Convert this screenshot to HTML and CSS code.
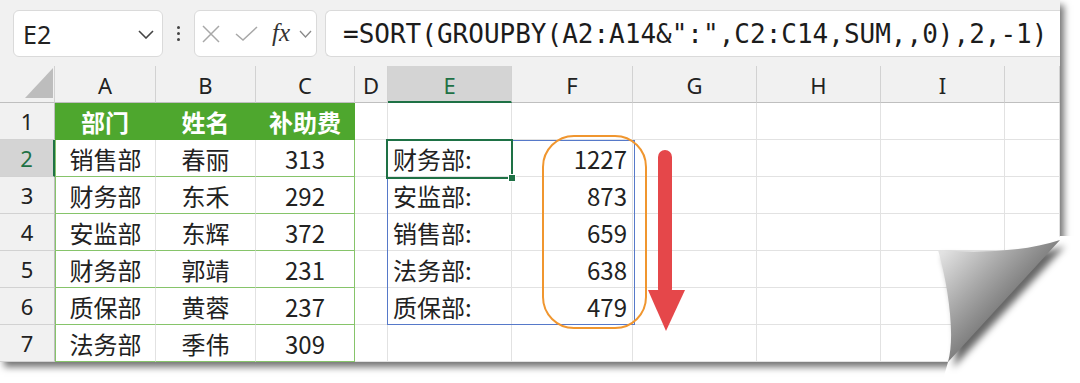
FILE: index.html
```html
<!DOCTYPE html>
<html lang="zh-CN">
<head>
<meta charset="utf-8">
<title>SORT GROUPBY</title>
<link rel="stylesheet" href="styles.css">
</head>
<body>
<div class="page">
  <div class="sheet">
    <div class="toolbar">
      <div class="namebox">
        <span>E2</span>
        <svg class="chev" width="16" height="9" viewBox="0 0 16 9"><polyline points="1,1 8,8 15,1" fill="none" stroke="#444" stroke-width="1.6"/></svg>
      </div>
      <div class="dots"><i></i><i></i><i></i></div>
      <div class="fxbox">
        <svg class="ico-x" width="18" height="18" viewBox="0 0 18 18"><path d="M1 1 L17 17 M17 1 L1 17" stroke="#a8a8a8" stroke-width="1.5" fill="none"/></svg>
        <svg class="ico-ok" width="23" height="15" viewBox="0 0 23 15"><polyline points="1,8 8,14 22,1" fill="none" stroke="#a8a8a8" stroke-width="1.5"/></svg>
        <span class="fx">fx</span>
        <svg class="ico-chev" width="13" height="8" viewBox="0 0 13 8"><polyline points="1,1 6.5,7 12,1" fill="none" stroke="#8a8a8a" stroke-width="1.3"/></svg>
      </div>
      <div class="formula">=SORT(GROUPBY(A2:A14&amp;":",C2:C14,SUM,,0),2,-1)</div>
    </div>
    <div class="gridwrap">
      <div class="grid">
        <div class="hd corner"><i class="tri"></i></div>
        <div class="hd">A</div><div class="hd">B</div><div class="hd">C</div><div class="hd">D</div>
        <div class="hd hsel">E</div><div class="hd">F</div><div class="hd">G</div><div class="hd">H</div><div class="hd">I</div><div class="hd"></div>

        <div class="rh">1</div>
        <div class="c g ga">部门</div><div class="c g">姓名</div><div class="c g gc">补助费</div>
        <div class="c"></div><div class="c"></div><div class="c"></div><div class="c"></div><div class="c"></div><div class="c"></div><div class="c"></div>

        <div class="rh rsel">2</div>
        <div class="c t ta">销售部</div><div class="c t">春丽</div><div class="c t tc">313</div>
        <div class="c"></div><div class="c l">财务部:</div><div class="c r">1227</div><div class="c"></div><div class="c"></div><div class="c"></div><div class="c"></div>

        <div class="rh">3</div>
        <div class="c t ta">财务部</div><div class="c t">东禾</div><div class="c t tc">292</div>
        <div class="c"></div><div class="c l">安监部:</div><div class="c r">873</div><div class="c"></div><div class="c"></div><div class="c"></div><div class="c"></div>

        <div class="rh">4</div>
        <div class="c t ta">安监部</div><div class="c t">东辉</div><div class="c t tc">372</div>
        <div class="c"></div><div class="c l">销售部:</div><div class="c r">659</div><div class="c"></div><div class="c"></div><div class="c"></div><div class="c"></div>

        <div class="rh">5</div>
        <div class="c t ta">财务部</div><div class="c t">郭靖</div><div class="c t tc">231</div>
        <div class="c"></div><div class="c l">法务部:</div><div class="c r">638</div><div class="c"></div><div class="c"></div><div class="c"></div><div class="c"></div>

        <div class="rh">6</div>
        <div class="c t ta">质保部</div><div class="c t">黄蓉</div><div class="c t tc">237</div>
        <div class="c"></div><div class="c l">质保部:</div><div class="c r">479</div><div class="c"></div><div class="c"></div><div class="c"></div><div class="c"></div>

        <div class="rh">7</div>
        <div class="c t ta">法务部</div><div class="c t">季伟</div><div class="c t tc">309</div>
        <div class="c"></div><div class="c"></div><div class="c"></div><div class="c"></div><div class="c"></div><div class="c"></div><div class="c"></div>
      </div>
      <div class="range"></div>
      <div class="selcell"><i class="handle"></i></div>
      <div class="oval"></div>
      <svg class="arrow" width="45" height="190" viewBox="0 0 45 190">
        <rect x="13" y="5" width="14" height="146" rx="7" fill="#e5474a"/>
        <polygon points="3,145 40,145 21,186" fill="#e5474a"/>
      </svg>
    </div>
  </div>
  <svg class="curl" width="180" height="183" viewBox="0 0 180 183">
    <defs>
      <linearGradient id="flapg" gradientUnits="userSpaceOnUse" x1="40" y1="55" x2="100" y2="112">
        <stop offset="0" stop-color="#e2e2e2"/>
        <stop offset="0.55" stop-color="#a9a9a9"/>
        <stop offset="1" stop-color="#7c7c7c"/>
      </linearGradient>
      <filter id="blur" x="-30%" y="-30%" width="160%" height="160%"><feGaussianBlur stdDeviation="3.5"/></filter>
    </defs>
    <polygon points="160,36 180,36 180,183 42,183 48,162" fill="#fff"/>
    <path d="M38,50 C75,53 125,52 160,40 L48,162 C56,135 47,80 38,50 Z" transform="translate(5,6)" fill="rgba(0,0,0,0.6)" filter="url(#blur)"/>
    <polygon points="160,40 180,40 180,183 60,183" fill="none"/>
    <path d="M38,50 C75,53 125,52 160,40 L48,162 C56,135 47,80 38,50 Z" fill="url(#flapg)"/>
  </svg>
</div>
</body>
</html>
```

FILE: styles.css
```css
* { box-sizing: border-box; margin: 0; padding: 0; }

body {
  width: 1080px;
  height: 383px;
  background: #fff;
  overflow: hidden;
  font-family: "Noto Sans CJK SC", "Noto Sans", sans-serif;
  color: #222;
}

.page {
  position: relative;
  width: 1080px;
  height: 383px;
}

.sheet {
  position: relative;
  width: 1060px;
  height: 362px;
  background: #fff;
  box-shadow: 4px 5px 7px rgba(0, 0, 0, 0.55);
  overflow: hidden;
}

/* ---------- toolbar ---------- */
.toolbar {
  height: 66px;
  background: #f1f1f1;
  display: flex;
  align-items: flex-start;
  padding: 10px 0 0 13px;
}

.namebox {
  width: 150px;
  height: 47px;
  background: #fff;
  border: 1px solid #dadada;
  border-radius: 6px;
  display: flex;
  align-items: center;
  justify-content: space-between;
  padding: 0 8px 0 9px;
  font-family: "Noto Sans", sans-serif;
  font-size: 25px;
  color: #222;
}

.chev { margin-top: 2px; }

.dots {
  width: 31px;
  height: 47px;
  display: flex;
  flex-direction: column;
  align-items: center;
  justify-content: center;
  gap: 2.5px;
}
.dots i {
  display: block;
  width: 3.5px;
  height: 3.5px;
  border-radius: 50%;
  background: #444;
}

.fxbox {
  width: 123px;
  height: 47px;
  background: #fff;
  border: 1px solid #dadada;
  border-radius: 6px;
  display: flex;
  align-items: center;
  padding-left: 7px;
}
.ico-ok { margin-left: 15px; }
.fx {
  margin-left: 14px;
  font-family: "Liberation Serif", serif;
  font-style: italic;
  font-size: 25px;
  color: #333;
  line-height: 1;
  margin-top: -3px;
}
.ico-chev { margin-left: 9px; }

.formula {
  flex: 1;
  height: 47px;
  margin-left: 8px;
  background: #fff;
  border: 1px solid #dadada;
  border-right: none;
  border-radius: 6px 0 0 6px;
  display: flex;
  align-items: center;
  padding-left: 17px;
  font-family: "DejaVu Sans Mono", monospace;
  font-size: 26px;
  color: #1c1c1c;
  white-space: nowrap;
}

/* ---------- grid ---------- */
.gridwrap { position: relative; }

.grid {
  display: grid;
  grid-template-columns: 55px 101px 100px 99px 33px 124px 121px 124px 124px 124px 55px;
  grid-template-rows: repeat(8, 37px);
}

.grid > div {
  display: flex;
  align-items: center;
  justify-content: center;
  font-size: 24px;
  white-space: nowrap;
}

.hd {
  background: #f1f1f1;
  border-right: 1px solid #d2d2d2;
  border-bottom: 1px solid #bfbfbf;
  font-family: "Noto Sans", sans-serif;
  font-size: 22px !important;
  color: #222;
  padding-top: 2px;
}

.corner { position: relative; }
.tri {
  position: absolute;
  left: 25px;
  top: 2px;
  width: 28px;
  height: 30px;
  background: #bdbdbd;
  clip-path: polygon(100% 0, 100% 100%, 0 100%);
}

.hsel {
  background: #d4d4d4;
  color: #1e7145;
  border-bottom: 2px solid #1e7145;
}

.rh {
  background: #f1f1f1;
  border-right: 1px solid #bfbfbf;
  border-bottom: 1px solid #d2d2d2;
  font-family: "Noto Sans", sans-serif;
  font-size: 22px !important;
  color: #222;
}

.rsel {
  background: #d4d4d4;
  color: #1e7145;
  border-right: 2px solid #1e7145;
}

.c {
  border-right: 1px solid #e2e2e2;
  border-bottom: 1px solid #e2e2e2;
}

.g {
  background: #4ea72e;
  color: #fff;
  font-weight: 700;
  border-right-color: #4ea72e;
  border-bottom-color: #4ea72e;
}
.gc { border-right: 1px solid #4ea72e; }

.t {
  border-bottom: 1px solid #86c46a;
}
.ta { border-left: 1px solid #86c46a; }
.tc { border-right: 1px solid #86c46a; }

.l { justify-content: flex-start !important; padding-left: 5px; }
.r { justify-content: flex-end !important; padding-right: 5px; }

/* ---------- overlays ---------- */
.range {
  position: absolute;
  left: 387px;
  top: 74px;
  width: 248px;
  height: 185px;
  border: 1.5px solid #5679c9;
}

.selcell {
  position: absolute;
  left: 386px;
  top: 73px;
  width: 127px;
  height: 40px;
  border: 2px solid #1e7145;
}
.handle {
  position: absolute;
  right: -5px;
  bottom: -5px;
  width: 8px;
  height: 8px;
  background: #1e7145;
  border: 1px solid #fff;
}

.oval {
  position: absolute;
  left: 542px;
  top: 69px;
  width: 105px;
  height: 194px;
  border: 2.5px solid #f0962f;
  border-radius: 32px;
}

.arrow {
  position: absolute;
  left: 645px;
  top: 79px;
}

.curl {
  position: absolute;
  left: 900px;
  top: 200px;
}
```
